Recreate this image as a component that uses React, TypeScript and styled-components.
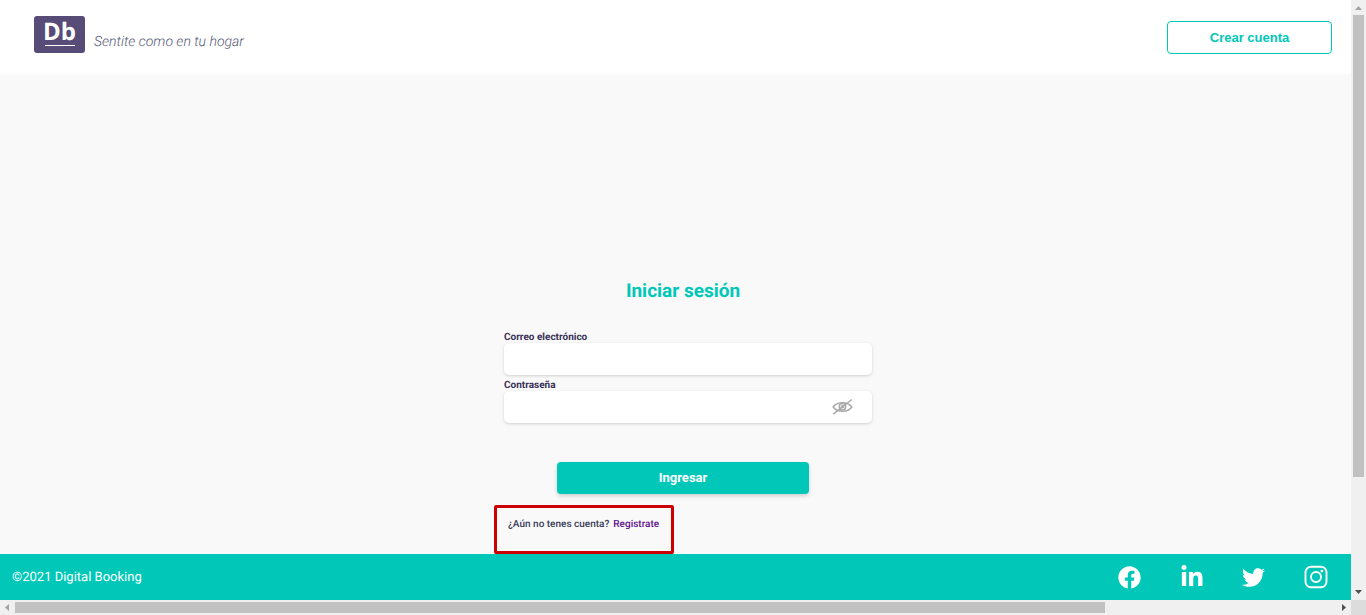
import React, { useState } from "react";
import styled, { createGlobalStyle } from "styled-components";
import { FaFacebook, FaLinkedinIn, FaTwitter } from "react-icons/fa";

const GlobalStyle = createGlobalStyle`
  *, *::before, *::after { box-sizing: border-box; }
  body {
    margin: 0;
    font-family: Roboto, "Liberation Sans", sans-serif;
    color: #383b58;
    text-rendering: geometricPrecision;
  }
`;

const teal = "#00c7b8";

const Frame = styled.div`
  display: grid;
  grid-template: minmax(0, 1fr) 15px / minmax(0, 1fr) 15px;
  height: 100vh;
  overflow: hidden;
  background: #f0f0f0;
`;

const Page = styled.div`
  display: flex;
  flex-direction: column;
  min-height: 0;
  background: #f9f9f9;
`;

const Header = styled.header`
  display: flex;
  align-items: center;
  justify-content: space-between;
  height: 74px;
  flex-shrink: 0;
  padding: 0 19px 0 34px;
  background: #fff;
`;

const Brand = styled.a`
  display: flex;
  align-items: center;
  gap: 9px;
  padding-bottom: 5px;
  color: #545776;
  text-decoration: none;
`;

const Logo = styled.span`
  display: flex;
  flex-direction: column;
  align-items: center;
  width: 51px;
  height: 37px;
  padding-top: 3px;
  border-radius: 3px;
  background: #574c77;
  color: #fff;
  font: 700 24px/25px "Open Sans", "Noto Sans", sans-serif;

  &::after {
    content: "";
    width: 30px;
    height: 1px;
    margin-top: 1px;
    background: #fff;
  }
`;

const Tagline = styled.span`
  padding-top: 15px;
  font-size: 14px;
  line-height: 18px;
  font-weight: 300;
  font-style: italic;
`;

const OutlineButton = styled.button`
  width: 165px;
  height: 33px;
  padding: 2px 6px 0;
  border: 1px solid ${teal};
  border-radius: 4px;
  background: #fff;
  color: ${teal};
  font: 700 13px/16px "Liberation Sans", Arial, sans-serif;
  cursor: pointer;
`;

const Main = styled.main`
  display: flex;
  flex: 1;
  flex-direction: column;
  align-items: center;
  justify-content: flex-end;
  width: 100vw;
  min-height: 0;
`;

const Form = styled.form`
  display: flex;
  flex-direction: column;
  width: 378px;
`;

const Title = styled.h1`
  margin: 0 0 30px;
  color: ${teal};
  font-size: 19px;
  line-height: 24px;
  font-weight: 700;
  text-align: center;
`;

const Fields = styled.div`
  display: flex;
  flex-direction: column;
  gap: 6px;
  margin: 0 0 39px 10px;
`;

const Field = styled.div`
  display: flex;
  flex-direction: column;
`;

const Label = styled.label`
  color: #383056;
  font-size: 10px;
  line-height: 10px;
  font-weight: 700;
`;

const InputWrap = styled.div`
  position: relative;
  display: flex;
`;

const Input = styled.input`
  width: 100%;
  height: 32px;
  padding: 0 12px;
  border: 0;
  border-radius: 5px;
  background: #fff;
  box-shadow: 0 1px 3px rgba(0, 0, 0, 0.17);
  font: 400 13px Roboto, sans-serif;
`;

const EyeButton = styled.button`
  position: absolute;
  top: 6px;
  right: 19px;
  display: flex;
  padding: 0;
  border: 0;
  background: none;
  cursor: pointer;
`;

const SubmitButton = styled.button`
  align-self: center;
  width: 252px;
  height: 32px;
  margin-bottom: 11px;
  border: 0;
  border-radius: 4px;
  background: ${teal};
  box-shadow: 0 2px 4px rgba(0, 0, 0, 0.17);
  color: #fff;
  font: 700 13px/16px Roboto, sans-serif;
  cursor: pointer;
`;

const SignUp = styled.p`
  width: 180px;
  height: 49px;
  margin: 0;
  padding: 11px;
  border: 3px solid #cc0000;
  border-radius: 2px;
  font-size: 10px;
  line-height: 12px;
  font-weight: 500;
  white-space: nowrap;
`;

const SignUpLink = styled.a`
  margin-left: 4px;
  color: #5c128b;
  text-decoration: none;
`;

const Footer = styled.footer`
  display: flex;
  align-items: center;
  justify-content: space-between;
  height: 46px;
  flex-shrink: 0;
  padding: 2px 23px 0 12px;
  background: ${teal};
  color: #fff;
  font-size: 13px;
  line-height: 16px;
`;

const Socials = styled.nav`
  display: flex;
  align-items: center;
  gap: 37px;
  padding-bottom: 2px;
`;

const SocialLink = styled.a`
  display: flex;
  justify-content: center;
  width: 25px;
  color: #fff;
`;

const ScrollTrack = styled.div<{ $horizontal?: boolean }>`
  display: flex;
  flex-direction: ${(p) => (p.$horizontal ? "row" : "column")};
  align-items: center;
  justify-content: space-between;
  background: #f0f0f0;
`;

const ScrollRail = styled.div<{ $horizontal?: boolean }>`
  display: flex;
  flex: 1;
  flex-direction: ${(p) => (p.$horizontal ? "row" : "column")};
  align-items: stretch;
  align-self: stretch;
  padding: ${(p) => (p.$horizontal ? "2px 0" : "0 2px")};
`;

const ScrollThumb = styled.div<{ $size: string }>`
  flex: 0 0 ${(p) => p.$size};
  background: #c1c1c1;
`;

const ScrollArrow = styled.svg`
  display: block;
  width: 15px;
  height: 15px;
`;

const ScrollCorner = styled.div`
  background: #dcdcdc;
`;

const EyeIcon = () => (
  <svg width="21" height="20" viewBox="0 0 21 20" fill="none" stroke="#a9a9a9" strokeWidth="1.5" aria-hidden="true">
    <path d="M1.2 10C5.2 4.4 15.8 4.4 19.8 10C15.8 15.6 5.2 15.6 1.2 10Z" />
    <circle cx="10.5" cy="9.8" r="3.2" />
    <circle cx="10.5" cy="9.8" r="1" />
    <path d="M1.2 17.2L19.8 2.5" />
  </svg>
);

const InstagramIcon = () => (
  <svg width="24" height="24" viewBox="0 0 24 24" fill="none" stroke="currentColor" strokeWidth="1.9" aria-hidden="true">
    <rect x="1.5" y="1.8" width="21" height="20.4" rx="5.5" />
    <circle cx="12" cy="12" r="5" />
    <circle cx="17.9" cy="6.1" r="1.4" fill="currentColor" stroke="none" />
  </svg>
);

const socials = [
  { label: "Facebook", icon: <FaFacebook size={23} /> },
  { label: "LinkedIn", icon: <FaLinkedinIn size={24} /> },
  { label: "Twitter", icon: <FaTwitter size={23} /> },
  { label: "Instagram", icon: <InstagramIcon /> },
];

export default function App() {
  const [visible, setVisible] = useState(false);

  return (
    <Frame>
      <GlobalStyle />
      <Page>
        <Header>
          <Brand href="#">
            <Logo>Db</Logo>
            <Tagline>Sentite como en tu hogar</Tagline>
          </Brand>
          <OutlineButton type="button">Crear cuenta</OutlineButton>
        </Header>
        <Main>
          <Form onSubmit={(e) => e.preventDefault()}>
            <Title>Iniciar sesión</Title>
            <Fields>
              <Field>
                <Label htmlFor="email">Correo electrónico</Label>
                <InputWrap>
                  <Input id="email" type="email" />
                </InputWrap>
              </Field>
              <Field>
                <Label htmlFor="password">Contraseña</Label>
                <InputWrap>
                  <Input id="password" type={visible ? "text" : "password"} />
                  <EyeButton type="button" aria-label="Mostrar contraseña" onClick={() => setVisible(!visible)}>
                    <EyeIcon />
                  </EyeButton>
                </InputWrap>
              </Field>
            </Fields>
            <SubmitButton type="submit">Ingresar</SubmitButton>
            <SignUp>
              ¿Aún no tenes cuenta?<SignUpLink href="#">Registrate</SignUpLink>
            </SignUp>
          </Form>
        </Main>
        <Footer>
          <span>©2021 Digital Booking</span>
          <Socials>
            {socials.map((s) => (
              <SocialLink key={s.label} href="#" aria-label={s.label}>
                {s.icon}
              </SocialLink>
            ))}
          </Socials>
        </Footer>
      </Page>
      <ScrollTrack aria-hidden="true">
        <ScrollArrow viewBox="0 0 15 15"><path d="M4 10L7.5 6L11 10Z" fill="#a3a3a3" /></ScrollArrow>
        <ScrollRail><ScrollThumb $size="81%" /></ScrollRail>
        <ScrollArrow viewBox="0 0 15 15"><path d="M4 5L7.5 9L11 5Z" fill="#505050" /></ScrollArrow>
      </ScrollTrack>
      <ScrollTrack $horizontal aria-hidden="true">
        <ScrollArrow viewBox="0 0 15 15"><path d="M9 4L5 7.5L9 11Z" fill="#a3a3a3" /></ScrollArrow>
        <ScrollRail $horizontal><ScrollThumb $size="82.5%" /></ScrollRail>
        <ScrollArrow viewBox="0 0 15 15"><path d="M6 4L10 7.5L6 11Z" fill="#505050" /></ScrollArrow>
      </ScrollTrack>
      <ScrollCorner />
    </Frame>
  );
}
